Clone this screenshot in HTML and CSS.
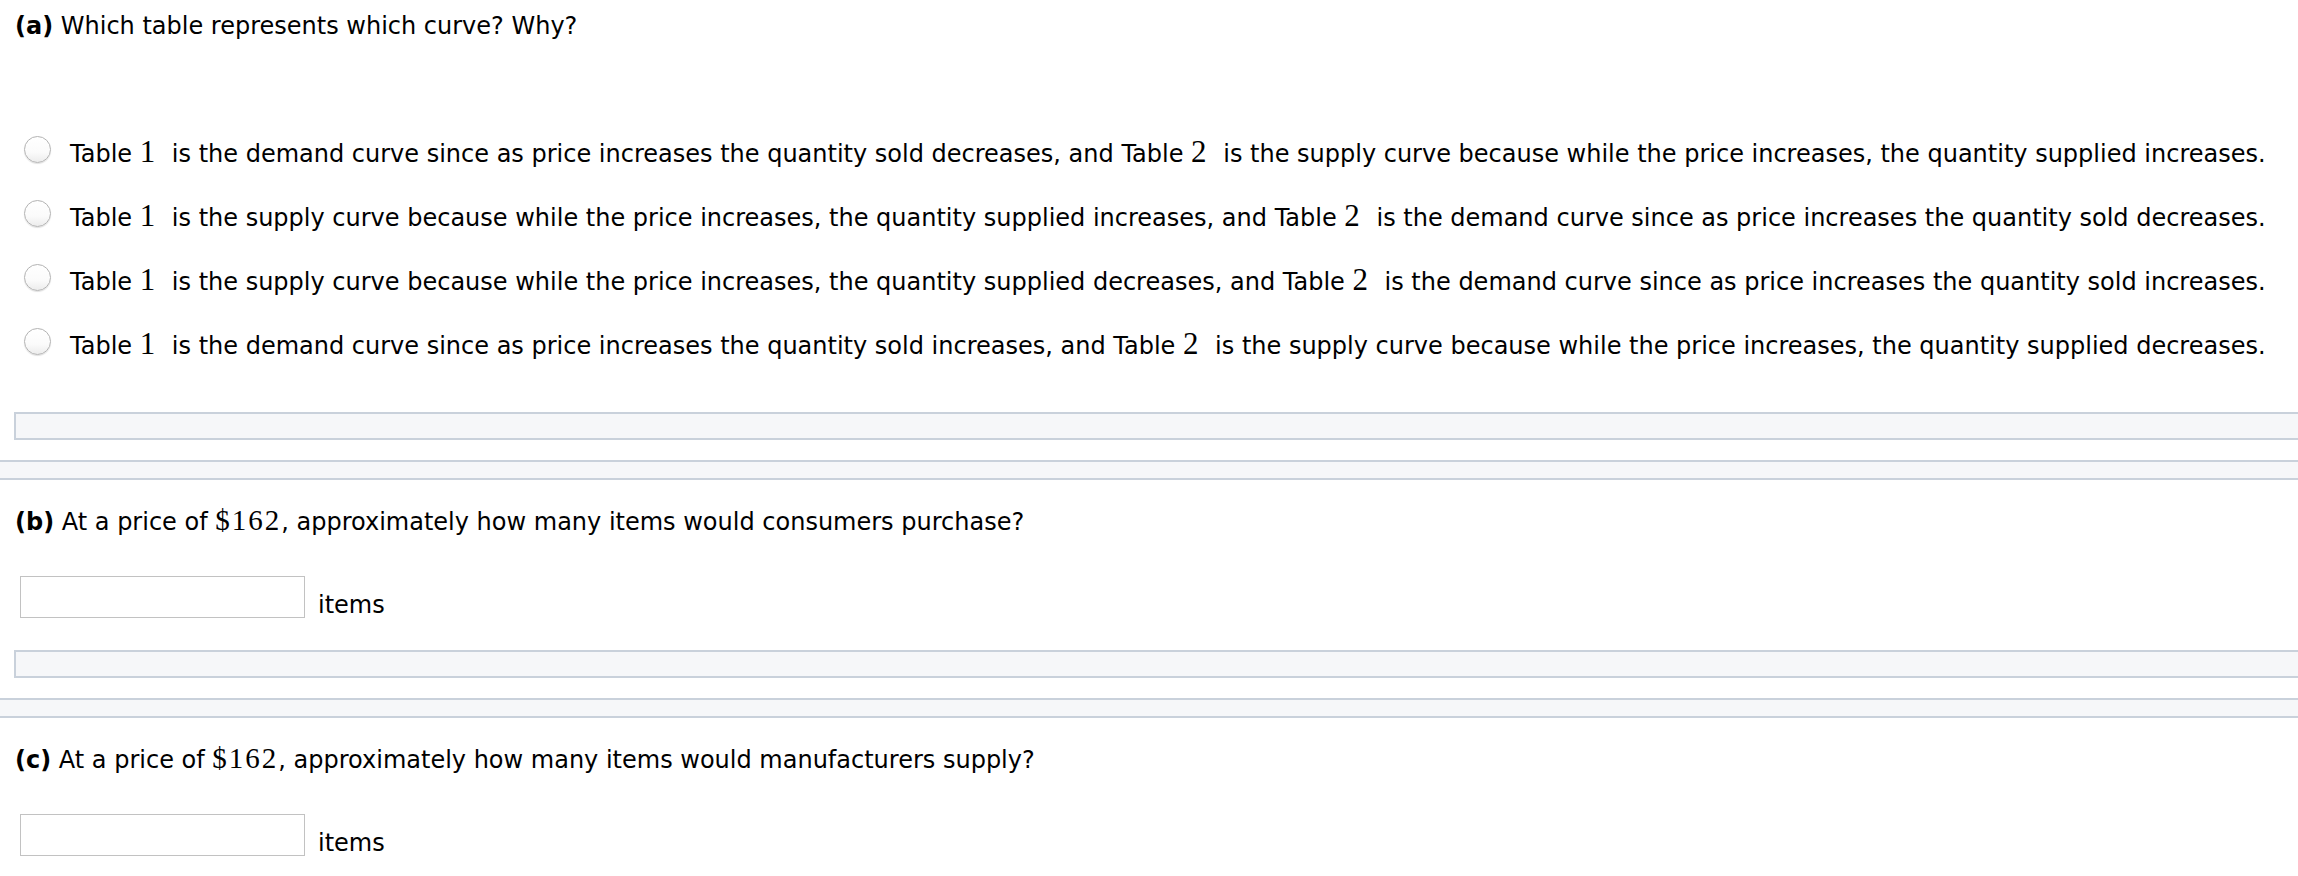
FILE: index.html
```html
<!DOCTYPE html>
<html lang="en">
<head>
<meta charset="utf-8">
<title>Supply and demand tables</title>
<link rel="stylesheet" href="styles.css">
</head>
<body>
<section class="part part-a">
  <p class="prompt"><b>(a)</b> Which table represents which curve? Why?</p>
  <div class="choices">
    <label class="choice"><input type="radio" name="qa" class="radio"><span class="txt">Table <span class="m">1</span> is the demand curve since as price increases the quantity sold decreases, and Table <span class="m">2</span> is the supply curve because while the price increases, the quantity supplied increases.</span></label>
    <label class="choice"><input type="radio" name="qa" class="radio"><span class="txt">Table <span class="m">1</span> is the supply curve because while the price increases, the quantity supplied increases, and Table <span class="m">2</span> is the demand curve since as price increases the quantity sold decreases.</span></label>
    <label class="choice"><input type="radio" name="qa" class="radio"><span class="txt">Table <span class="m">1</span> is the supply curve because while the price increases, the quantity supplied decreases, and Table <span class="m">2</span> is the demand curve since as price increases the quantity sold increases.</span></label>
    <label class="choice"><input type="radio" name="qa" class="radio"><span class="txt">Table <span class="m">1</span> is the demand curve since as price increases the quantity sold increases, and Table <span class="m">2</span> is the supply curve because while the price increases, the quantity supplied decreases.</span></label>
  </div>
  <div class="feedback"></div>
</section>
<div class="sep"></div>
<section class="part">
  <p class="prompt"><b>(b)</b> At a price of <span class="m mi">$162</span>, approximately how many items would consumers purchase?</p>
  <div class="answer"><input type="text" class="box"><span class="unit">items</span></div>
  <div class="feedback"></div>
</section>
<div class="sep"></div>
<section class="part">
  <p class="prompt"><b>(c)</b> At a price of <span class="m mi">$162</span>, approximately how many items would manufacturers supply?</p>
  <div class="answer"><input type="text" class="box"><span class="unit">items</span></div>
</section>
</body>
</html>
```
FILE: styles.css
```css
html, body {
  margin: 0;
  padding: 0;
  background: #ffffff;
  overflow: hidden;
}
body {
  font-family: "DejaVu Sans", Verdana, sans-serif;
  font-size: 24px;
  line-height: 24px;
  color: #000000;
}
.prompt {
  margin: 0;
  padding-left: 15px;
  white-space: nowrap;
  height: 24px;
}
.part-a .prompt {
  padding-top: 14px;
}
.part .prompt b {
  font-weight: bold;
}
.m {
  font-family: "Liberation Serif", "Times New Roman", serif;
  font-size: 31px;
  line-height: 24px;
  margin: 0 9px 0 0;
}
.mi {
  margin: 0;
  font-size: 29px;
  letter-spacing: 2px;
}
.choices {
  margin-top: 82px;
  display: flex;
  flex-direction: column;
}
.choice {
  display: flex;
  align-items: center;
  height: 64px;
  white-space: nowrap;
}
.radio {
  appearance: none;
  -webkit-appearance: none;
  margin: 0 19px 5px 24px;
  width: 27px;
  height: 27px;
  box-sizing: border-box;
  border-radius: 50%;
  border: 1px solid #b3b3b3;
  background: linear-gradient(#ffffff 0%, #fbfbfb 60%, #ececec 100%);
  box-shadow: 0 1px 1px rgba(0, 0, 0, 0.12);
  flex: none;
}
.txt {
  display: block;
  height: 24px;
}
.feedback {
  margin: 36px 0 0 14px;
  height: 24px;
  background: #f6f7f9;
  border: 2px solid #c9d1db;
  border-right: 0;
}
.sep {
  margin-top: 20px;
  height: 16px;
  background: #f6f7f9;
  border-top: 2px solid #c9d1db;
  border-bottom: 2px solid #c9d1db;
}
.part .prompt {
  margin-top: 28px;
}
.part-a .prompt {
  margin-top: 0;
}
.answer {
  margin-top: 44px;
  display: flex;
  align-items: flex-end;
  padding-left: 20px;
}
.box {
  box-sizing: border-box;
  width: 285px;
  height: 42px;
  margin: 0;
  border: 1px solid #c2c2c2;
  border-radius: 0;
  background: #ffffff;
  padding: 0 6px;
  font: inherit;
}
.unit {
  margin: 0 0 1px 13px;
  height: 24px;
}
.answer + .feedback {
  margin-top: 32px;
}
```
